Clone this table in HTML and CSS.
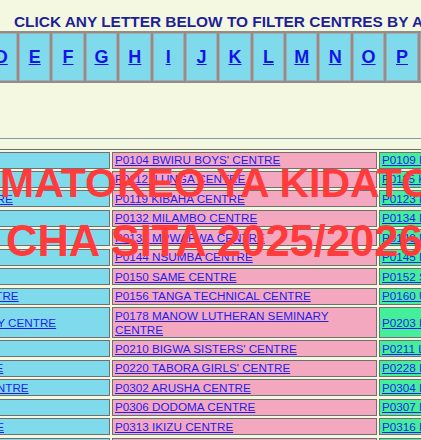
FILE: index.html
```html
<!DOCTYPE html>
<html lang="en">
<head>
<meta charset="utf-8">
<title>Matokeo ya Kidato cha Sita</title>
<link rel="stylesheet" href="styles.css">
</head>
<body>
<div class="page">
  <h2 class="filter-title">CLICK ANY LETTER BELOW TO FILTER CENTRES BY ALPHABET</h2>
  <div class="letters">
    <div class="letter"><a href="#">A</a></div>
    <div class="letter"><a href="#">B</a></div>
    <div class="letter"><a href="#">C</a></div>
    <div class="letter"><a href="#">D</a></div>
    <div class="letter"><a href="#">E</a></div>
    <div class="letter"><a href="#">F</a></div>
    <div class="letter"><a href="#">G</a></div>
    <div class="letter"><a href="#">H</a></div>
    <div class="letter"><a href="#">I</a></div>
    <div class="letter"><a href="#">J</a></div>
    <div class="letter"><a href="#">K</a></div>
    <div class="letter"><a href="#">L</a></div>
    <div class="letter"><a href="#">M</a></div>
    <div class="letter"><a href="#">N</a></div>
    <div class="letter"><a href="#">O</a></div>
    <div class="letter"><a href="#">P</a></div>
    <div class="letter"><a href="#">Q</a></div>
    <div class="letter"><a href="#">R</a></div>
    <div class="letter"><a href="#">S</a></div>
    <div class="letter"><a href="#">T</a></div>
  </div>
  <div class="rule"></div>
  <div class="centres">
    <div class="cell c1"><a href="#">P0102 MBEYA CENTRE</a></div>
    <div class="cell c2"><a href="#">P0104 BWIRU BOYS' CENTRE</a></div>
    <div class="cell c3"><a href="#">P0109 ILBORU CENTRE</a></div>

    <div class="cell c1"><a href="#">P0110 LINDI CENTRE</a></div>
    <div class="cell c2"><a href="#">P0112 ILUNGA CENTRE</a></div>
    <div class="cell c3"><a href="#">P0115 KIBITI CENTRE</a></div>

    <div class="cell c1"><a href="#">P0117 KOROGWE CENTRE</a></div>
    <div class="cell c2"><a href="#">P0119 KIBAHA CENTRE</a></div>
    <div class="cell c3"><a href="#">P0123 MKWAWA CENTRE</a></div>

    <div class="cell c1"><a href="#">P0128 NZEGA CENTRE</a></div>
    <div class="cell c2"><a href="#">P0132 MILAMBO CENTRE</a></div>
    <div class="cell c3"><a href="#">P0134 MZUMBE CENTRE</a></div>

    <div class="cell c1"><a href="#">P0135 IRINGA CENTRE</a></div>
    <div class="cell c2"><a href="#">P0138 MPWAPWA CENTRE</a></div>
    <div class="cell c3"><a href="#">P0140 MAGU CENTRE</a></div>

    <div class="cell c1"><a href="#">P0142 BABATI CENTRE</a></div>
    <div class="cell c2"><a href="#">P0144 NSUMBA CENTRE</a></div>
    <div class="cell c3"><a href="#">P0145 ISAKA CENTRE</a></div>

    <div class="cell c1"><a href="#">P0147 KILOSA CENTRE</a></div>
    <div class="cell c2"><a href="#">P0150 SAME CENTRE</a></div>
    <div class="cell c3"><a href="#">P0152 SUMBAWANGA CENTRE</a></div>

    <div class="cell c1"><a href="#">P0155 SHINYANGA CENTRE</a></div>
    <div class="cell c2"><a href="#">P0156 TANGA TECHNICAL CENTRE</a></div>
    <div class="cell c3"><a href="#">P0160 UYOLE CENTRE</a></div>

    <div class="cell c1"><a href="#">P0170 KIBO SECONDARY CENTRE</a></div>
    <div class="cell c2"><a href="#">P0178 MANOW LUTHERAN SEMINARY CENTRE</a></div>
    <div class="cell c3"><a href="#">P0203 ILALA CENTRE</a></div>

    <div class="cell c1"><a href="#">P0207 MASASI CENTRE</a></div>
    <div class="cell c2"><a href="#">P0210 BIGWA SISTERS' CENTRE</a></div>
    <div class="cell c3"><a href="#">P0211 LUGOBA CENTRE</a></div>

    <div class="cell c1"><a href="#">P0215 MUSOMA CENTRE</a></div>
    <div class="cell c2"><a href="#">P0220 TABORA GIRLS' CENTRE</a></div>
    <div class="cell c3"><a href="#">P0228 IGUNGA CENTRE</a></div>

    <div class="cell c1"><a href="#">P0301 BIHARAMULO CENTRE</a></div>
    <div class="cell c2"><a href="#">P0302 ARUSHA CENTRE</a></div>
    <div class="cell c3"><a href="#">P0304 ILBORU CENTRE</a></div>

    <div class="cell c1"><a href="#">P0305 NJOMBE CENTRE</a></div>
    <div class="cell c2"><a href="#">P0306 DODOMA CENTRE</a></div>
    <div class="cell c3"><a href="#">P0307 IRINGA CENTRE</a></div>

    <div class="cell c1"><a href="#">P0310 HANDENI CENTRE</a></div>
    <div class="cell c2"><a href="#">P0313 IKIZU CENTRE</a></div>
    <div class="cell c3"><a href="#">P0316 ITIGI CENTRE</a></div>

    <div class="cell c1"><a href="#">P0318 KONDOA CENTRE</a></div>
    <div class="cell c2"><a href="#">P0320 KAHAMA CENTRE</a></div>
    <div class="cell c3"><a href="#">P0322 KIGOMA CENTRE</a></div>
  </div>
</div>
<div class="banner">
  <div class="banner-line first">MATOKEO YA KIDATO</div>
  <div class="banner-line second">CHA SITA 2025/2026</div>
</div>
</body>
</html>
```
FILE: styles.css
```css
* { box-sizing: border-box; }

html, body {
  margin: 0;
  padding: 0;
}

body {
  position: relative;
  width: 421px;
  height: 440px;
  overflow: hidden;
  background: #f5f8e1;
  font-family: "Liberation Sans", Arial, sans-serif;
}

.filter-title {
  margin: 0;
  padding: 12px 0 0 14px;
  font-size: 15.4px;
  line-height: 19px;
  font-weight: bold;
  color: #1f1f99;
  white-space: nowrap;
}

.letters {
  display: grid;
  grid-template-columns: repeat(20, 31.4px);
  gap: 2px;
  width: max-content;
  margin-left: -116.6px;
  padding: 2px;
  background: #8e8e8e;
}

.letter {
  height: 48px;
  display: flex;
  align-items: center;
  justify-content: center;
  background: #7fdbeb;
  border: 1px solid #a9a9a9;
}

.letter a {
  font-size: 18px;
  font-weight: bold;
  color: #1414e6;
  text-decoration: underline;
}

.rule {
  margin-top: 55px;
  border-top: 1px solid #8a98b0;
}

.centres {
  display: grid;
  grid-template-columns: 250px 265px 250px;
  column-gap: 2px;
  row-gap: 2.45px;
  width: max-content;
  margin: 9.5px 0 0 -143px;
  padding: 2px;
  border: 1px solid #6e6e6e;
}

.cell {
  display: flex;
  align-items: center;
  padding: 0.5px 2px;
  border: 1px solid #707070;
  font-size: 11.7px;
  line-height: 14px;
}

.c1 { background: #7fdbeb; }
.c2 { background: #f4a8c0; }
.c3 { background: #45ee98; }

.cell a {
  color: #1e1ef0;
  text-decoration: underline;
}

.banner {
  position: absolute;
  left: 0;
  top: 154.3px;
  color: #ff3b3b;
  font-weight: bold;
  line-height: 58px;
  white-space: nowrap;
  pointer-events: none;
}

.banner-line.first {
  font-size: 41px;
}

.banner-line.second {
  font-size: 43.5px;
  padding-left: 6px;
}
```
